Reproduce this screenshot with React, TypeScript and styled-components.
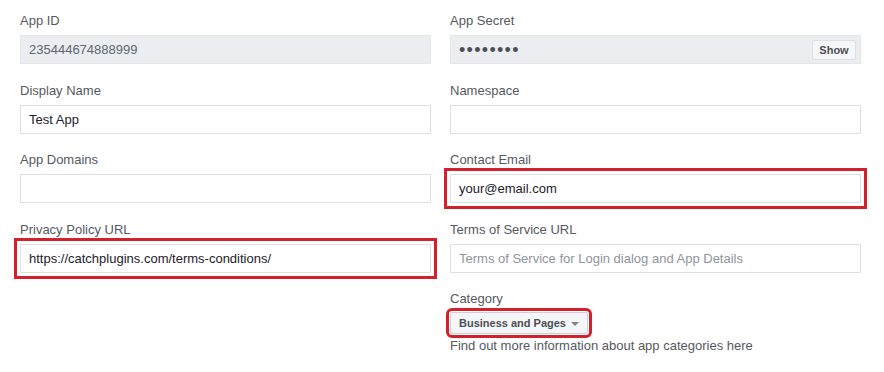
import styled, { createGlobalStyle } from 'styled-components';

const GlobalStyle = createGlobalStyle`
    html, body {
        margin: 0;
        padding: 0;
        background: #fff;
        font-family: "Liberation Sans", Arial, Helvetica, sans-serif;
    }
`

interface FieldDef {
    label: string,
    value?: string,
    placeholder?: string,
    disabled?: boolean,
    highlight?: boolean
}

const leftFields: FieldDef[] = [
    {label: 'App ID', value: '235444674888999', disabled: true},
    {label: 'Display Name', value: 'Test App'},
    {label: 'App Domains'},
    {label: 'Privacy Policy URL', value: 'https://catchplugins.com/terms-conditions/', highlight: true},
]

const rightFields: FieldDef[] = [
    {label: 'Namespace'},
    {label: 'Contact Email', value: 'your@email.com', highlight: true},
    {label: 'Terms of Service URL', placeholder: 'Terms of Service for Login dialog and App Details'},
]

const Field = ({label, value, placeholder, disabled, highlight}: FieldDef) => (
    <FieldWrapper>
        <Label>{label}</Label>
        <Input
            readOnly
            defaultValue={value}
            placeholder={placeholder}
            $disabled={disabled}
            $highlight={highlight}
        />
    </FieldWrapper>
)

const App = () => {
    return (
        <Page>
            <GlobalStyle />
            <Column>
                {leftFields.map(field => (
                    <Field key={field.label} {...field} />
                ))}
            </Column>
            <Column>
                <FieldWrapper>
                    <Label>App Secret</Label>
                    <SecretBox>
                        <Dots>••••••••</Dots>
                        <SmallButton>Show</SmallButton>
                    </SecretBox>
                </FieldWrapper>
                {rightFields.map(field => (
                    <Field key={field.label} {...field} />
                ))}
                <FieldWrapper>
                    <Label>Category</Label>
                    <CategoryButton>
                        Business and Pages <Caret />
                    </CategoryButton>
                    <Help>Find out more information about app categories here</Help>
                </FieldWrapper>
            </Column>
        </Page>
    )
}

const Page = styled.div`
    display: grid;
    grid-template-columns: 411px 411px;
    column-gap: 19px;
    padding: 12px 0 0 20px;
    align-items: start;
`

const Column = styled.div`
    display: flex;
    flex-direction: column;
    gap: 17.5px;
`

const FieldWrapper = styled.div`
    display: flex;
    flex-direction: column;
    align-items: flex-start;
`

const Label = styled.div`
    font-size: 13px;
    line-height: 18px;
    color: #555960;
    margin-bottom: 5px;
`

const Input = styled.input<{ $disabled?: boolean, $highlight?: boolean }>`
    box-sizing: border-box;
    width: 100%;
    height: 29px;
    margin: 0;
    padding: 0 8px;
    font-family: inherit;
    font-size: 13px;
    color: ${p => p.$disabled ? '#606770' : '#1d2129'};
    background: ${p => p.$disabled ? '#ebedf0' : '#fff'};
    border: 1px solid ${p => p.$disabled ? '#e4e6e9' : '#dddfe2'};
    border-radius: 0;
    outline: ${p => p.$highlight ? '3px solid #d3202c' : 'none'};
    outline-offset: 3px;

    &::placeholder {
        color: #90949c;
    }
`

const SecretBox = styled.div`
    box-sizing: border-box;
    width: 100%;
    height: 29px;
    display: flex;
    align-items: center;
    justify-content: space-between;
    padding: 0 4px 0 8px;
    background: #ebedf0;
    border: 1px solid #e4e6e9;
`

const Dots = styled.span`
    font-size: 18px;
    letter-spacing: 1.3px;
    color: #4b4f56;
    line-height: 1;
`

const SmallButton = styled.button`
    box-sizing: border-box;
    height: 20px;
    width: 44px;
    padding: 0;
    font-family: inherit;
    font-size: 11px;
    font-weight: bold;
    color: #4b4f56;
    background: #f5f6f7;
    border: 1px solid #dddfe2;
    border-radius: 2px;
`

const CategoryButton = styled.button`
    box-sizing: border-box;
    height: 22px;
    margin: -1px 0 4px;
    padding: 0 8px;
    display: flex;
    align-items: center;
    gap: 5px;
    white-space: nowrap;
    font-family: inherit;
    font-size: 11px;
    font-weight: bold;
    color: #4b4f56;
    background: #f5f6f7;
    border: 1px solid #ccd0d5;
    border-radius: 2px;
    outline: 3px solid #d3202c;
    outline-offset: 1px;
`

const Caret = styled.span`
    width: 0;
    height: 0;
    border-left: 4px solid transparent;
    border-right: 4px solid transparent;
    border-top: 4px solid #7f838a;
    margin-top: 1px;
`

const Help = styled.div`
    font-size: 13px;
    line-height: 16px;
    color: #555960;
`

export default App;
